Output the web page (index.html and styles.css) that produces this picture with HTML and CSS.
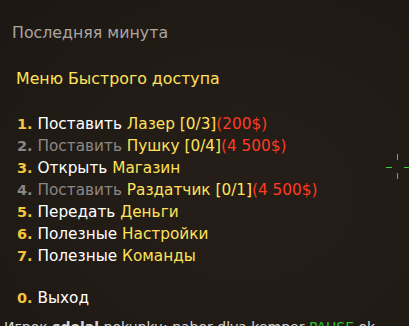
FILE: index.html
```html
<!DOCTYPE html>
<html lang="ru">
<head>
  <meta charset="UTF-8">
  <title>Меню Быстрого доступа</title>
  <link rel="stylesheet" href="styles.css">
</head>
<body>
  <div class="hud">

    <div class="round">Последняя минута</div>

    <div class="menu">
      <div class="title">Меню Быстрого доступа</div>

      <ul class="items">
        <li><span class="num">1.</span> Поставить <span class="hl">Лазер [0/3]</span><span class="price">(200$)</span></li>
        <li class="off"><span class="num">2.</span> Поставить <span class="hl">Пушку [0/4]</span><span class="price">(4 500$)</span></li>
        <li><span class="num">3.</span> Открыть <span class="hl">Магазин</span></li>
        <li class="off"><span class="num">4.</span> Поставить <span class="hl">Раздатчик [0/1]</span><span class="price">(4 500$)</span></li>
        <li><span class="num">5.</span> Передать <span class="hl">Деньги</span></li>
        <li><span class="num">6.</span> Полезные <span class="hl">Настройки</span></li>
        <li><span class="num">7.</span> Полезные <span class="hl">Команды</span></li>
        <li class="exit"><span class="num">0.</span> Выход</li>
      </ul>
    </div>

    <!-- crosshair -->
    <div class="cross">
      <i class="ch top"></i><i class="ch bottom"></i><i class="ch left"></i><i class="ch right"></i>
    </div>

    <div class="chat">Игрок <b>sdelal</b> pokupku: nabor dlya kemper   <span class="g">PAUSE</span> ok</div>

  </div>
</body>
</html>
```

FILE: styles.css
```css
/* Reset + base */
* { margin:0; padding:0; box-sizing:border-box; }
body { background:#221c17; width:409px; height:326px; overflow:hidden; }
.hud {
  position:relative;
  width:409px; height:326px;
  overflow:hidden;
  background:radial-gradient(ellipse at 60% 60%, #251e18 0%, #201a15 70%, #1c1713 100%);
  font-family:"DejaVu Sans", Verdana, sans-serif;
  font-size:15.3px;
  color:#fff;
  padding:23px 0 0 12px;
}

/* Round timer message */
.round { color:#a9a6a2; font-size:15.8px; line-height:20px; }

/* Menu */
.menu { padding:26px 0 0 4px; }
.title { color:#ffe25a; font-size:15.8px; line-height:20px; margin-bottom:24px; }
.items { list-style:none; padding-left:1px; }
.items li { line-height:22px; white-space:nowrap; }
.items .num { color:#f4c43c; font-weight:bold; font-size:14.5px; }
.items .hl { color:#ffe25a; }
.items .price { color:#ff3b22; }
.items li.off { color:#8b8784; }
.items li.off .num { color:#8b8784; }
.items li.exit { margin-top:20px; }

/* Crosshair */
.cross { position:absolute; left:397px; top:167px; width:1px; height:1px; }
.ch { position:absolute; background:#3ed13a; display:block; }
.ch.top    { left:0; top:-13px; width:1px; height:6px; }
.ch.bottom { left:0; top:6px;  width:1px; height:6px; }
.ch.left   { top:0; left:-11px; width:6px; height:1px; }
.ch.right  { top:0; left:7px;  width:6px; height:1px; }

/* Chat line cut by the screen edge */
.chat {
  position:absolute; left:4px; top:319px;
  font-size:14px; color:#d8d8d8; white-space:nowrap;
}
.chat .g { color:#2fc12c; }
```
